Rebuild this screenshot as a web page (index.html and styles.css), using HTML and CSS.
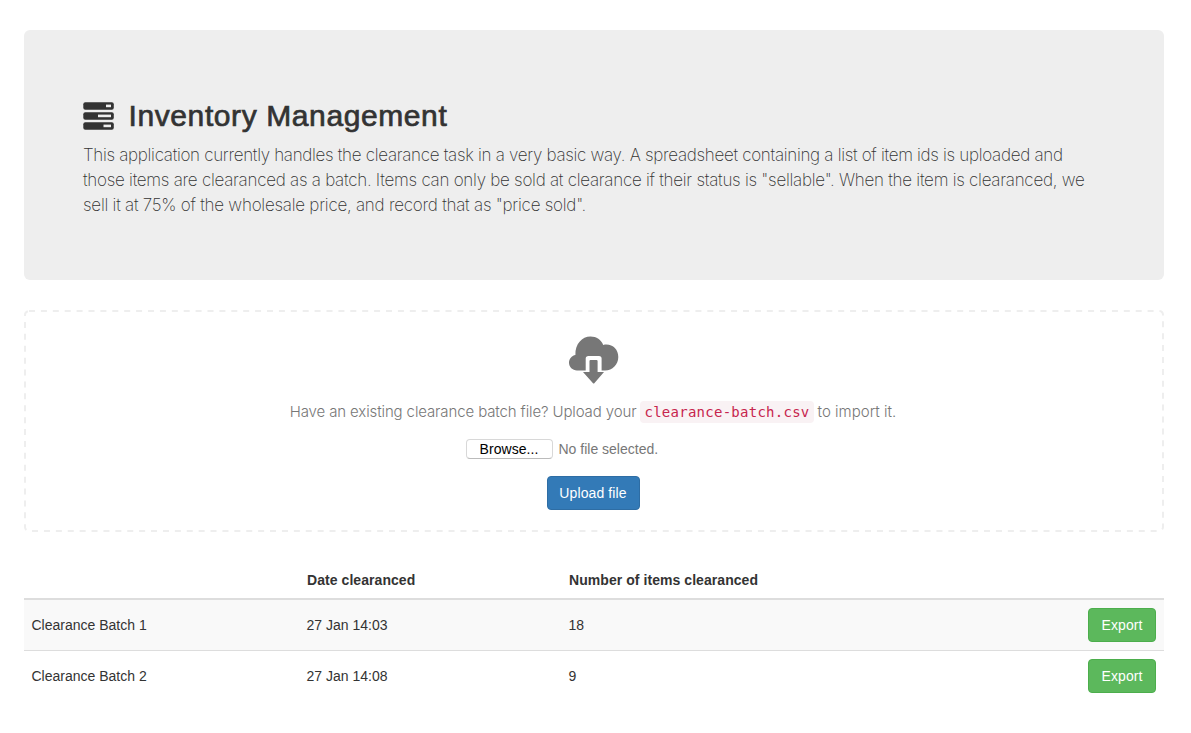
FILE: index.html
```html
<!DOCTYPE html>
<html lang="en">
<head>
<meta charset="utf-8">
<title>Inventory Management</title>
<link rel="stylesheet" href="styles.css">
</head>
<body>
<main class="container">
  <header class="jumbotron">
    <h1 class="title">
      <svg class="tasks-icon" width="31" height="28" viewBox="0 0 31 28" aria-hidden="true">
        <g fill="#333"><rect x=".3" y=".2" width="30.500" height="7.500" rx="2"/><rect x=".3" y="10.200" width="30.500" height="7.500" rx="2"/><rect x=".3" y="20.200" width="30.500" height="7.500" rx="2"/></g>
        <g fill="#eee"><rect x="23" y="2.600" width="5" height="2.600"/><rect x="15" y="12.600" width="13" height="2.600"/><rect x="20.500" y="22.600" width="7.500" height="2.600"/></g>
      </svg>
      <span>Inventory Management</span>
    </h1>
    <p class="lead"><span class="l1">This application currently handles the clearance task in a very basic way. A spreadsheet containing a list of item ids is uploaded and</span><br><span class="l2">those items are clearanced as a batch. Items can only be sold at clearance if their status is "sellable". When the item is clearanced, we</span><br><span class="l3">sell it at 75% of the wholesale price, and record that as "price sold".</span></p>
  </header>
  <section class="upload">
    <svg class="frame" aria-hidden="true"><rect class="dash" x="1" y="1" width="1138" height="220" rx="4"/></svg>
    <svg class="cloud-icon" width="50" height="48" viewBox="0 0 50 48" aria-hidden="true">
      <path fill="#777" d="M8 34.500C3.500 34.500 0 31 0 26.800C0 22.800 2.700 19.700 6.400 19C6 8 13 .5 21.500 .5C27.500 .5 32.200 3.800 34.200 8.900C42.500 7 49.300 12.500 49.300 21C49.300 28.500 43.500 34.500 36 34.500H32.600V22.500Q32.600 20 30 20H19.500Q16.700 20 16.700 22.500V34.500Z"/>
      <path fill="#777" d="M21.500 24H27.500Q28.600 24 28.600 25V36H35L25.500 47Q24.700 48 23.800 47L14 36H20.500V25Q20.500 24 21.500 24Z"/>
    </svg>
    <p class="hint"><span class="hint-before">Have an existing clearance batch file? Upload your</span><code>clearance-batch.csv</code><span class="hint-after">to import it.</span></p>
    <div class="picker"><button class="browse">Browse...</button><span>No file selected.</span></div>
    <button class="btn primary">Upload file</button>
  </section>
  <table class="batches">
    <thead><tr><th class="c1"></th><th class="c2">Date clearanced</th><th class="c3">Number of items clearanced</th><th></th></tr></thead>
    <tbody>
      <tr class="odd"><td>Clearance Batch 1</td><td>27 Jan 14:03</td><td>18</td><td class="action"><button class="btn success">Export</button></td></tr>
      <tr><td>Clearance Batch 2</td><td>27 Jan 14:08</td><td>9</td><td class="action"><button class="btn success">Export</button></td></tr>
    </tbody>
  </table>
</main>
</body>
</html>
```
FILE: styles.css
```css
* { box-sizing: border-box; }
body { margin: 0; background: #fff; color: #333; font: 14px/20px "Liberation Sans", Arial, sans-serif; }
.container { width: 1140px; margin: 30px 0 0 24px; }
.jumbotron { height: 250px; padding: 69px 59px 0; border-radius: 6px; background: #eee; }
.title { display: flex; align-items: center; gap: 14.500px; height: 34px; margin: 0 0 10px; font-size: 30px; line-height: 34px; font-weight: 400; letter-spacing: .6px; -webkit-text-stroke: .7px #333; white-space: nowrap; }
.tasks-icon { flex: none; }
.lead { margin: 0; font: 200 17px/25px Inter, sans-serif; white-space: nowrap; }
.l1 { letter-spacing: -.304px; }
.l2 { letter-spacing: -.264px; }
.l3 { letter-spacing: -.245px; }
.upload { position: relative; display: flex; flex-direction: column; align-items: center; height: 222px; margin-top: 30px; padding: 26px 2px 0 0; color: #777; }
.frame { position: absolute; inset: 0; width: 1140px; height: 222px; }
.dash { fill: none; stroke: #eee; stroke-width: 2; stroke-dasharray: 6 5.9; }
.cloud-icon { flex: none; margin-left: 2px; }
.hint { display: flex; align-items: center; height: 22px; margin: 17px 0 16px; font: 300 15px/22px Inter, sans-serif; white-space: nowrap; }
.hint-before { letter-spacing: -.12px; }
.hint-after { letter-spacing: .02px; }
.hint code { height: 22px; margin: 0 4px; padding: 0 4px; border-radius: 4px; background: #f9f2f4; color: #c7254e; font: 14px/22px "DejaVu Sans Mono", monospace; letter-spacing: .26px; }
.picker { display: flex; align-items: center; gap: 6px; width: 255px; height: 20px; margin-bottom: 17px; }
.browse { width: 87px; height: 20px; padding: 0; border: 1px solid #d8d8d8; border-bottom-color: #bbb; border-radius: 4px; background: #fff; color: #000; font: 14px/18px "Liberation Sans", sans-serif; letter-spacing: .05px; }
.btn { height: 34px; padding: 0 12px; border: 1px solid; border-radius: 4px; color: #fff; font: 14px/20px "Liberation Sans", sans-serif; white-space: nowrap; }
.primary { width: 93px; padding: 0 10px; border-color: #2e6da4; background: #337ab7; letter-spacing: .1px; }
.success { display: block; width: 68px; margin-left: auto; padding: 0 11px; border-color: #4cae4c; background: #5cb85c; letter-spacing: .1px; }
.batches { width: 1140px; margin-top: 30px; border-collapse: collapse; table-layout: fixed; }
.batches th { height: 37px; padding: 0 8px; border-bottom: 2px solid #ddd; text-align: left; letter-spacing: .06px; }
.batches td { height: 51px; padding: 8px 8px 8px 7.500px; border-top: 1px solid #ddd; }
.odd { background: #f9f9f9; }
.c1 { width: 275px; }
.c2 { width: 262px; }
.c3 { width: 320px; }
```
